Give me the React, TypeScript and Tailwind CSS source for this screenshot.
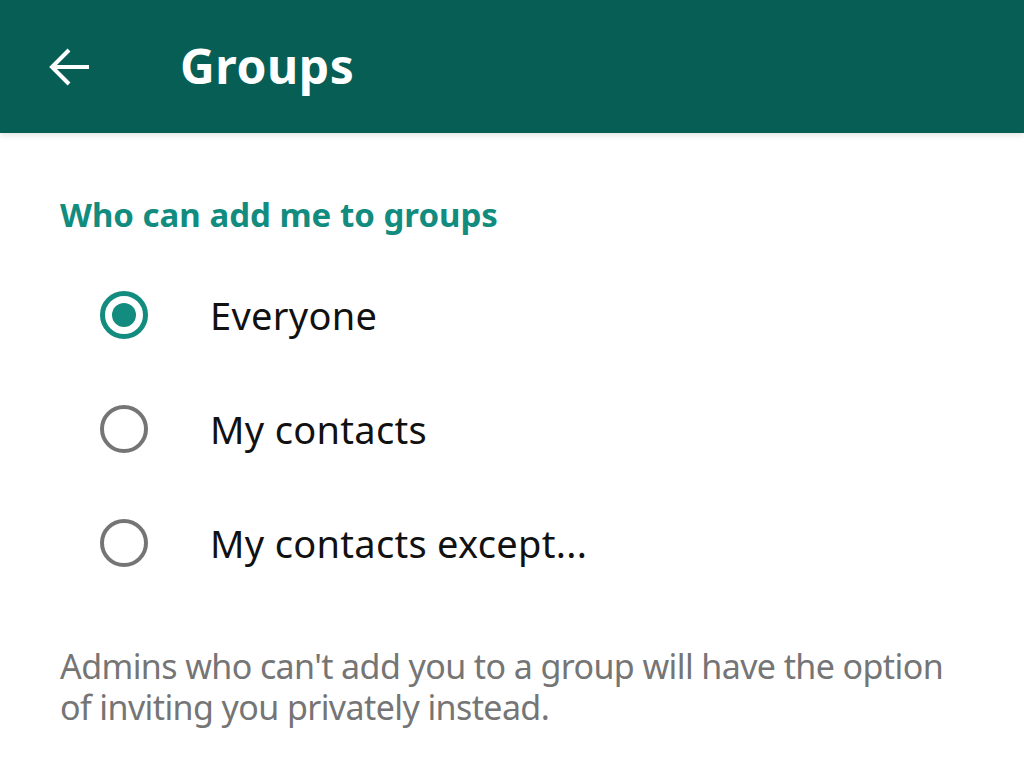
import React, { useState } from 'react';

const options = ['Everyone', 'My contacts', 'My contacts except...'];

export default function App() {
  const [selected, setSelected] = useState(0);

  return (
    <div className="w-[1024px] h-[768px] bg-white overflow-hidden font-['Noto_Sans',sans-serif]">
      {/* Toolbar */}
      <div className="h-[133px] bg-[#075e54] flex items-center shadow-[0_2px_6px_rgba(0,0,0,0.12)]">
        <button className="w-[140px] h-full flex items-center pl-[48px] text-white">
          <svg width="44" height="40" viewBox="0 0 44 40" fill="none" stroke="currentColor" strokeWidth="4" strokeLinecap="butt">
            <path d="M41 20H5" />
            <path d="M21 3L4 20l17 17" />
          </svg>
        </button>
        <h1 className="ml-[40px] text-white text-[48px] font-bold leading-none tracking-[0.6px] pb-[2px]">Groups</h1>
      </div>

      {/* Section */}
      <div className="px-[60px] pt-[62px]">
        <h2 className="text-[#128c7e] text-[33px] font-bold leading-[40px]">Who can add me to groups</h2>

        <div className="mt-[23px] flex flex-col">
          {options.map((label, i) => (
            <button
              key={label}
              onClick={() => setSelected(i)}
              className="h-[114px] flex items-center text-left"
            >
              <div className="w-[150px] pl-[40px] flex items-center">
                {selected === i ? (
                  <span className="w-[48px] h-[48px] rounded-full border-[5px] border-[#128c7e] flex items-center justify-center">
                    <span className="w-[24px] h-[24px] rounded-full bg-[#128c7e]" />
                  </span>
                ) : (
                  <span className="w-[48px] h-[48px] rounded-full border-[4px] border-[#757575]" />
                )}
              </div>
              <span className="text-[38px] text-[#111] leading-none tracking-[0.3px]">{label}</span>
            </button>
          ))}
        </div>

        <p className="mt-[46px] text-[34px] text-[#757575] leading-[41px] tracking-[-0.6px]">
          Admins who can't add you to a group will have the option of inviting you privately instead.
        </p>
      </div>
    </div>
  );
}
